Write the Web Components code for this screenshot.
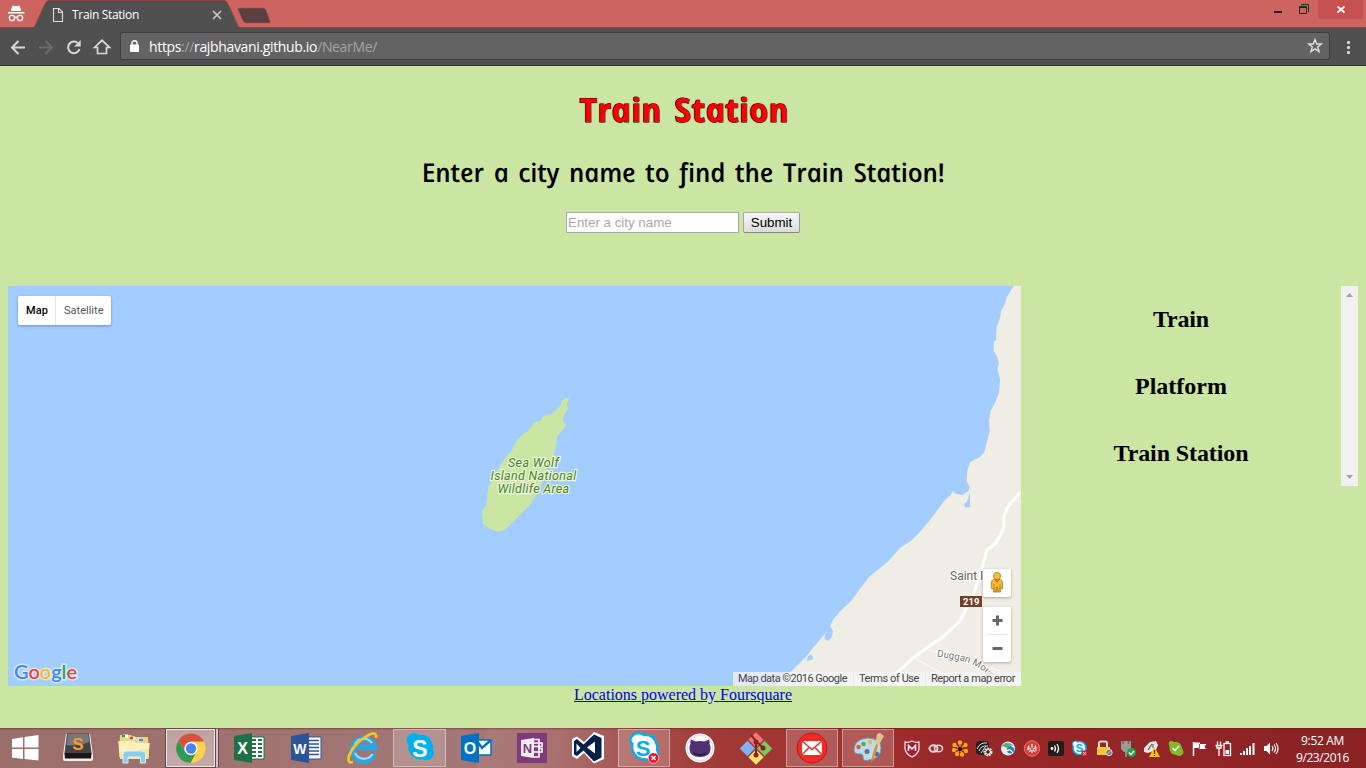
<!DOCTYPE html>
<html lang="en">
<head>
<meta charset="utf-8">
<title>Train Station</title>
<style>
html,body{margin:0;height:100%;overflow:hidden}
body{display:flex;flex-direction:column;background:#cbe6a3;font-family:"Liberation Serif",serif}
</style>
</head>
<body>
<browser-bar></browser-bar>
<station-page></station-page>
<task-bar></task-bar>
<script>
const define=(name,html,after)=>customElements.define(name,class extends HTMLElement{
  connectedCallback(){
    if(this.shadowRoot)return;
    this.attachShadow({mode:'open'}).innerHTML=html;
    if(after)after(this);
  }
});

/* Browser window frame: tab strip and address bar */
define('browser-bar',`
<style>
:host{display:block;flex:none;height:66px;font-family:"Open Sans","Noto Sans",sans-serif;color:#fff}
*{box-sizing:border-box}
.strip{height:28px;background:#cd645f;display:flex;position:relative}
.strip>svg{flex:none;display:block}
.tabtitle{position:absolute;left:72px;top:7px;font-size:12px;line-height:16px}
.tools{height:38px;background:#505050;border-bottom:1px solid #333;display:flex;align-items:center;padding-bottom:1px}
.tools>svg{flex:none}
.url{width:1210px;height:28px;background:#636363;border:1px solid #3b3b3b;border-radius:3px;display:flex;align-items:center;font-size:14px;padding-left:9px}
.url span{color:#a4a4a4}
.url fit-text{margin-left:10px;color:#fff}
.url .star{margin-left:auto;margin-right:6px}
</style>
<div class="strip">
<svg width="1366" height="28" viewBox="0 0 1366 28">
<rect y="27" width="1366" height="1" fill="#8b4542"/>
<path d="M34 28L45 4Q46.500 .5 49 .5H224Q226.500 .5 228 4L239 28Z" fill="#505050" stroke="#8b4542"/>
<rect x="34" y="27" width="205" height="1" fill="#505050"/>
<path d="M239 8H263Q265 8 266 10L270 21Q270.500 23 269 23H246Q244 23 243 21L238 9.500Q237.800 8 239 8Z" fill="#5a4140" stroke="#a9524f" stroke-width=".6"/>
<path d="M11 10L12.500 5.500L16 6.300L19.500 5.500L21 10V11H11ZM8 12H24.500V13.600H8Z" fill="#fff"/>
<g fill="none" stroke="#fff" stroke-width="1.200"><circle cx="12" cy="18" r="2.700"/><circle cx="20" cy="18" r="2.700"/><path d="M14.700 17.500Q16 16.700 17.300 17.500"/></g>
<path d="M53.500 8.500H59L62.500 12V21.500H53.500ZM58.500 8.500V12.500H62.500" fill="none" stroke="#ddd" stroke-width="1.100"/>
<path d="M213 11L221 19M221 11L213 19" stroke="#c8c8c8" stroke-width="1.700"/>
<rect x="1274" y="11" width="8" height="2" fill="#2b2020"/>
<path d="M1299.500 6.500H1306.500V13.500H1299.500ZM1299 7.500H1307M1301 4.500H1308.500V12" fill="none" stroke="#2b2020" stroke-width="1"/>
<rect x="1318" width="45" height="19" fill="#c75050"/>
<path d="M1337.500 6.500L1344.500 12.500M1344.500 6.500L1337.500 12.500" stroke="#fff" stroke-width="1.700"/>
</svg>
<fit-text class="tabtitle" w="67">Train Station</fit-text>
</div>
<div class="tools">
<svg width="120" height="36" viewBox="0 28 120 36">
<path d="M25 47.500H12.500M18.500 41L12 47.500L18.500 54" fill="none" stroke="#d9d9d9" stroke-width="2"/>
<path d="M39 47.500H51.500M45.500 41L52 47.500L45.500 54" fill="none" stroke="#6b6b6b" stroke-width="2"/>
<path d="M79.500 49A5.800 5.800 0 1 1 77.800 43" fill="none" stroke="#d9d9d9" stroke-width="2"/>
<path d="M80.700 40V46.500H74.200Z" fill="#d9d9d9"/>
<path d="M94.500 47.500L102 40.300L109.500 47.500H106.500V53.500H97.500V47.500Z" fill="none" stroke="#d9d9d9" stroke-width="1.700"/>
</svg>
<div class="url">
<svg width="9" height="12" viewBox="0 0 9 12"><rect y="4.500" width="9" height="7.500" rx=".8" fill="#fff"/><path d="M2 5V3.200A2.500 2.500 0 0 1 7 3.200V5" fill="none" stroke="#fff" stroke-width="1.400"/></svg>
<fit-text w="228">https<span>://</span>rajbhavani.github.io<span>/NearMe/</span></fit-text>
<svg class="star" width="16" height="16" viewBox="0 0 16 16"><path d="M8 1.700L9.800 6H14.300L10.700 8.900L12 13.600L8 10.900L4 13.600L5.300 8.900L1.700 6H6.200Z" fill="none" stroke="#ddd" stroke-width="1.500"/></svg>
</div>
<svg width="36" height="36" viewBox="1330 28 36 36" fill="#d9d9d9"><rect x="1347" y="41" width="3" height="3" rx="1"/><rect x="1347" y="46" width="3" height="3" rx="1"/><rect x="1347" y="51" width="3" height="3" rx="1"/></svg>
</div>`);

/* Map with land, labels and controls */
define('city-map',`
<style>
:host{display:block;position:relative;width:1013px;height:400px;overflow:hidden;font-family:Roboto,sans-serif;font-size:11px}
*{box-sizing:border-box}
svg{display:block}
.types{position:absolute;left:10px;top:10px;display:flex;height:29px;background:#fff;border-radius:2px;box-shadow:0 1px 3px rgba(0,0,0,.3);line-height:29px;color:#565656}
.types div{padding:0 7.5px 0 8px}
.types div:first-child{color:#000;font-weight:500;border-right:1px solid #e6e6e6;width:38px}
.ctl{position:absolute;right:10px;width:28px;background:#fff;border-radius:2px;box-shadow:0 1px 3px rgba(0,0,0,.3)}
.man{top:283px;height:28px}.zoom{top:321px;height:55px}
.terms{position:absolute;right:0;bottom:0;height:14px;line-height:14px;display:flex;background:rgba(245,245,245,.75);color:#444;font-size:11px}
.terms div{padding:0 6px 0 5px;border-left:1px solid #ebe9e4}
.terms div:first-child{border:0}
.logo{position:absolute;left:6px;top:373px;font:600 20px/24px Lato,sans-serif;-webkit-text-stroke:3px #d9e8fb;paint-order:stroke}
.place{position:absolute;left:475px;top:170px;width:101px;font-size:12.5px;line-height:13px;font-style:italic;color:#4a8424;-webkit-text-stroke:2.4px #eaf5dc;paint-order:stroke;display:flex;flex-direction:column;align-items:center}
</style>
<svg width="1013" height="400" viewBox="8 286 1013 400">
<rect x="8" y="286" width="1013" height="400" fill="#a3ccff"/>
<path fill="#f0ede5" d="M1013.700 286L1010 292L1006.700 297L1005 304L1001 311L1000 318L996.700 327L996 340L993.700 342V351L997 357L999 363L997.300 369L1000 379L999.500 388L999 393L995 403L991 410L989 420L989.700 431L986.700 443L984 453L980 457L970 462L967.500 470L966.500 481L969.700 487L968.700 491L962 495L955 493.300L952.700 490.700L950.700 495L945 500L940 506.500L930 520L918 534L910 541.500L900 548L888 561.500L869 577L858 591.500L851 601L840 611.500L833 620L828 630L813 648L805 658L792 670.500L774 686H1021V286Z"/>
<path fill="#a3ccff" d="M970 492V507L965 507.500L964 504L967 502ZM830 626L833 631L832 637L828 641L824.500 639L825 635ZM811 654L813 657L812.500 659.500L807 661L807.500 657Z"/>
<path d="M925 649L940 653L1000 671M914 658L940 672L960 684" fill="none" stroke="#fafaf7" stroke-width="1.200"/>
<path d="M1021 492L1015 498L1007 508L1004 517L1003.700 528L996 543L987 550L981.700 570L974 593L960 621L943 637L925 649L913 658L897 673L880 690" fill="none" stroke="#fff" stroke-width="3" stroke-linejoin="round"/>
<path fill="#cbe6a3" d="M565 398L569 398.500L567 404L568 409L564 415L563 421L566 425.500L562 431L557 437L556 447L553 457L548 468L538 492L530 505L522 513L513 522L505 530L498 531.500L490 529L483 524L482 511L485 508L487 500L488 488L495 475L500 466L505 458L512 450L517 440L523 434L527 432L535 422L540 421L544 416L552 414L557 409L561 405L562 401Z"/>
<text x="950" y="580.300" font-size="12" fill="#6b6351" stroke="#fff" stroke-width="2" paint-order="stroke">Saint I</text>
<rect x="960" y="596" width="22" height="11" fill="#733f2b"/><text x="963" y="605" font-size="9.500" font-weight="700" fill="#fff">219</text>
<path id="street" d="M936.500 656.500C958 660 971 661 984 672L1015 700" fill="none"/>
<text font-size="9.800" fill="#77756f" stroke="#fff" stroke-width="2" paint-order="stroke"><textPath href="#street">Duggan Mountain</textPath></text>
</svg>
<div class="place"><fit-text w="51">Sea Wolf</fit-text><fit-text w="86">Island National</fit-text><fit-text w="72">Wildlife Area</fit-text></div>
<fit-text class="logo" w="63"><span style="color:#4285f4">G</span><span style="color:#ea4335">o</span><span style="color:#fbbc05">o</span><span style="color:#4285f4">g</span><span style="color:#34a853">l</span><span style="color:#ea4335">e</span></fit-text>
<div class="types"><div><fit-text w="22">Map</fit-text></div><div><fit-text w="39.500">Satellite</fit-text></div></div>
<div class="ctl man"><svg width="28" height="28" viewBox="983 569 28 28"><path d="M993.500 579.500Q991.500 580 991.300 583V588.500H993.300V592H1000.700V588.500H1002.500V583Q1002.500 580 1000.500 579.500Z" fill="#fbb829" stroke="#9a7c43" stroke-width=".8"/><path d="M993.900 584V588.500H994.900V591.500H996.500V587H997.500V591.500H999.100V588.500H1000.100V584" fill="none" stroke="#a87d2d" stroke-width=".7"/><path d="M994.500 579.500H999.500L997 583Z" fill="#e66d20"/><circle cx="997" cy="576" r="3.600" fill="#fbc02d" stroke="#9a7c43" stroke-width=".8"/></svg></div>
<div class="ctl zoom"><svg width="28" height="55" viewBox="983 607 28 55"><path d="M992.500 620.500H1002.500M997.500 615.500V625.500M992.500 648.500H1002.500" stroke="#666" stroke-width="3"/><path d="M987 634.500H1006" stroke="#e6e6e6"/></svg></div>
<div class="terms"><div><fit-text w="109">Map data ©2016 Google</fit-text></div><div><fit-text w="60">Terms of Use</fit-text></div><div><fit-text w="84">Report a map error</fit-text></div></div>
`);

/* Scrolling column of place names */
define('place-list',`
<style>
:host{display:flex;width:337px;height:200px;color:#000}
.items{flex:1;text-align:center;padding-top:20px}
.bar{width:17px;background:#f1f1f1}
svg{display:block}
</style>
<div class="items"><slot></slot></div>
<div class="bar"><svg width="17" height="200"><path d="M5 11L8.500 7L12 11ZM5 189L8.500 193L12 189Z" fill="#a3a3a3"/></svg></div>
`);

define('station-page',`
<style>
:host{display:flex;flex-direction:column;align-items:center;flex:1;background:#cbe6a3}
h1,h2,form{margin:0}
.hand{font-family:"Comic Sans MS","Open Sans",sans-serif;font-style:italic;line-height:40px;height:40px;transform:skewX(12deg)}
h1{margin-top:24px;font-size:33px;font-weight:700;color:#f00;-webkit-text-stroke:1px #300;paint-order:stroke;word-spacing:4px;text-shadow:0 0 1px #000}
.hand.lead{margin-top:22px;font-size:26px;font-weight:600;word-spacing:3px;color:#000}
form{margin-top:20px;display:flex;gap:4px;height:21px}
input,button{box-sizing:border-box;height:21px;font:13.333px "Liberation Sans",Arial,sans-serif;margin:0}
input{width:173px;border:1px solid #a9a9a9;padding:0 1px;background:#fff;border-radius:0}
input::placeholder{color:#a9a9a9}
button{width:57px;padding:0;border:1px solid #a0a0a0;border-color:#aaa #999 #888 #aaa;border-radius:2px;background:linear-gradient(#f6f6f6,#dcdcdc);color:#000}
.main{display:flex;align-self:stretch;margin:53px 8px 0;height:400px}
place-list h2{margin:0 0 40px;font-size:24px;line-height:27px;font-weight:700}
.credit{font-size:16px;line-height:18px;color:#00e}
.credit fit-text{text-decoration:underline}
</style>
<h1 class="hand"><fit-text w="209">Train Station</fit-text></h1>
<h2 class="hand lead"><fit-text w="523">Enter a city name to find the Train Station!</fit-text></h2>
<form><input placeholder="Enter a city name"><button type="button">Submit</button></form>
<div class="main"><city-map></city-map>
<place-list><h2><fit-text w="56">Train</fit-text></h2><h2><fit-text w="92">Platform</fit-text></h2><h2><fit-text w="135">Train Station</fit-text></h2></place-list></div>
<a class="credit" href="#"><fit-text w="218">Locations powered by Foursquare</fit-text></a>
`);

/* Taskbar glyphs, each on a 40 x 40 field (tray glyphs 24 x 40) */
const skype='<path d="M9 7Q14 3 20 7Q31 6 34 17Q35 20 34.500 23Q37 28 33 32Q29 36 24 33.500Q11 34 8 23Q7.500 20 8 17Q3 12 9 7Z" transform="translate(1 .3) scale(.93)"';
const icons={
start:'<path d="M7 11L18 9.300V19.500H7ZM19.500 9L33.500 7V19.500H19.500ZM7 21H18V31L7 29.500ZM19.500 21H33.500V32.500L19.500 31Z" fill="#fff"/>',
sublime:'<path d="M8 6H32L35 27V31Q35 33 33 33H7Q5 33 5 31V27Z" fill="#eee"/><path d="M9 5.500H31L33.500 25Q33.500 27 32 27H8Q6.500 27 6.500 25Z" fill="#444"/><path d="M10 6H30L31.500 14Q20 19 8.500 17Z" fill="#777"/><path d="M6.500 25H33.500L33 30.500H7Z" fill="#171717"/><text x="20" y="21.500" font-size="17" font-weight="700" fill="#ff9a3d" text-anchor="middle">S</text>',
explorer:'<path d="M6 7H17L19 9H34L35 29H5Z" fill="#ead584"/><path d="M9 8H14M16 10H21M24 12H29" stroke="#fff" stroke-width="3"/><path d="M8 8H11" stroke="#2c9c43" stroke-width="2.500"/><path d="M16 10H19" stroke="#c93c2c" stroke-width="2.500"/><path d="M25 12H29" stroke="#3495d1" stroke-width="2.500"/><path d="M4.500 13H20L22 15H35.500L34.500 31H6Z" fill="#fae69a"/><path d="M4.500 13H20L22 15H35.500L35 21L5 25Z" fill="#fdf1b9"/><path d="M9 35V26Q9 23 12 23H28Q31.500 23 31.500 26V35H26.500V29H14V35Z" fill="#8ccceb" stroke="#d9f1fb"/>',
chrome:'<circle cx="20" cy="20.500" r="14.500" fill="#fcd34a"/><path d="M7.440 12.750A14.500 14.500 0 0 0 19.500 35L26 23L20 20L14 23Z" fill="#2f9a55"/><path d="M7.440 12.750L14 23L20 13.500H33A14.500 14.500 0 0 0 7.440 12.750Z" fill="#d94f40"/><circle cx="20" cy="20.500" r="6.700" fill="#fff"/><circle cx="20" cy="20.500" r="5.200" fill="#4a86e8"/>',
excel:'<path d="M20 9H35V31H20Z" fill="#fff" stroke="#207347"/><path d="M22 12H27M29 12H33M22 16H27M29 16H33M22 20H27M29 20H33M22 24H27M29 24H33M22 28H27M29 28H33" stroke="#207347" stroke-width="2.200"/><path d="M5 8L23 5V35L5 32Z" fill="#1e7145"/><text x="13.500" y="26" font-size="16" font-weight="700" fill="#fff" text-anchor="middle">X</text>',
word:'<path d="M20 9H35V31H20Z" fill="#fff" stroke="#2a5699"/><path d="M23 12.500H33M23 16H33M23 19.500H33M23 23H33M23 26.500H33" stroke="#2a5699" stroke-width="1.600"/><path d="M5 8L23 5V35L5 32Z" fill="#2a5699"/><text x="13.800" y="25.500" font-size="14" font-weight="700" fill="#fff" text-anchor="middle">W</text>',
ie:'<path d="M31 26A11 11 0 1 1 31.500 19.500H14" fill="none" stroke="#2ea5de" stroke-width="6"/><path d="M29.500 26A10 10 0 0 1 12 25M12 16A10 10 0 0 1 29 15" fill="none" stroke="#9be2fb" stroke-width="2"/><path d="M10 34Q4 36 6 28Q11 15 24 8Q34 2 33 10" fill="none" stroke="#f4c426" stroke-width="2.700"/>',
skype:skype+' fill="#00aff0"/><text x="20" y="28.500" font-size="23" font-weight="700" fill="#fff" text-anchor="middle">S</text>',
outlook:'<path d="M20 12H35V27H20Z" fill="#fff" stroke="#0072c6" stroke-width="1.500"/><path d="M21 13L26 20L35 12" fill="none" stroke="#0072c6" stroke-width="2.500"/><path d="M5 8L23 5V35L5 32Z" fill="#0072c6"/><text x="14" y="26" font-size="16" font-weight="700" fill="#fff" text-anchor="middle">O</text>',
onenote:'<rect x="5" y="5" width="30" height="30" fill="#80397b"/><path d="M22 11.500H27V29H22M22 15H30V18.500H22M26 20.500H30V24H22" stroke="#fff" stroke-width="1.600" fill="none"/><path d="M9 12L22 10V30L9 28Z" fill="#f7eef6"/><text x="15.500" y="25" font-size="13" font-weight="700" fill="#80397b" text-anchor="middle">N</text>',
vs:'<path d="M26 4L36 8V31L26 35.500L16 25L9 31L4 28V11L9 8.500L16 14Z" fill="#fff"/><path d="M26 6.500L33.500 10V29.500L26 33.500L15.500 22.500L9 28L6 26.500V13L9 11L15.500 16.500Z" fill="#061f4a"/><path d="M8.500 15.500L12.500 20L8.500 24ZM27 13.500V25.500L19 19.500Z" fill="#fff"/>',
skypeb:skype+' fill="#fff" stroke="#00aff0" stroke-width="2.500"/><text x="19" y="27.500" font-size="22" font-weight="700" fill="#00aff0" text-anchor="middle">S</text><circle cx="29.500" cy="30" r="5.300" fill="#e81123" stroke="#fff" stroke-width=".6"/><path d="M27.500 28L31.500 32M31.500 28L27.500 32" stroke="#fff" stroke-width="1.500"/>',
github:'<circle cx="20" cy="20" r="14.500" fill="#f8f5fb"/><circle cx="20" cy="20" r="12.800" fill="none" stroke="#d9d2df" stroke-width=".7"/><path d="M11 11.500L15.500 13.500Q20 12.500 24.500 13.500L29 11.500Q30 14 29.500 16Q31 18 30.500 21Q30 29 20 29T9.500 21Q9 18 10.500 16Q10 14 11 11.500Z" fill="#4f3073"/><path d="M13 24Q20 28 27 24Q25 28 20 28T13 24Z" fill="#321a4b"/>',
git:'<g transform="translate(0 .5) rotate(45 20 20)"><rect x="8.500" y="8.500" width="10.800" height="10.800" fill="#f07578"/><rect x="20.700" y="8.500" width="10.800" height="10.800" fill="#79c95e"/><rect x="20.700" y="20.700" width="10.800" height="10.800" fill="#ffe16b"/><rect x="8.500" y="20.700" width="10.800" height="10.800" fill="#82b1f0"/></g><path d="M15 7L20 13V28M20 13L27 20" stroke="#8b2025" stroke-width="2" fill="none"/><g fill="#8b2025"><circle cx="20" cy="14" r="2.500"/><circle cx="27" cy="20" r="2.500"/><circle cx="20" cy="27" r="2.500"/></g>',
mail:'<circle cx="20" cy="20" r="15" fill="#f12b24" stroke="#b11f1c"/><rect x="10" y="13" width="20" height="14" fill="#fff"/><path d="M10 13L20 21.500L30 13M10 27L17 19.500M30 27L23 19.500" fill="none" stroke="#f12b24" stroke-width="1.400"/>',
paint:'<path d="M6 22Q6 11 20 10Q33 11 33 20Q33 30 21 32Q15 34 15 29Q15 25 10 26Q6 26 6 22Z" fill="#b9ddeb" stroke="#6e9cb4"/><circle cx="10.500" cy="19" r="2.200" fill="#e9503f"/><circle cx="15.500" cy="16" r="2.300" fill="#5daa47"/><circle cx="22" cy="14" r="2.300" fill="#edc033"/><circle cx="19" cy="23.500" r="2.500" fill="#6f7077"/><circle cx="28.500" cy="26" r="2.500" fill="#5169bd"/><path d="M23 35Q24 26 28 16L30 17Q28 28 23 35Z" fill="#e78b30"/><path d="M27.500 15L29 6L32 5L36 8L31 17Z" fill="#dec58d"/>',
shield:'<path d="M5 14Q9 15 12 13Q15 15 19 14V21Q18 26 12 29Q6 26 5 21Z" fill="#b71234" stroke="#e9e2e2" stroke-width="1.300"/><path d="M8.500 23V17.500L12 21L15.500 17.500V23" fill="none" stroke="#fff" stroke-width="1.500"/>',
cloud:'<ellipse cx="9.500" cy="20.500" rx="4" ry="3.300" fill="none" stroke="#e8dada" stroke-width="2"/><ellipse cx="14.500" cy="20.500" rx="4" ry="3.300" fill="none" stroke="#e8dada" stroke-width="1.600"/>',
sun:'<g fill="#f5a81c"><circle cx="12" cy="14.500" r="2.200"/><circle cx="17.500" cy="17" r="2.200"/><circle cx="18" cy="23" r="2.200"/><circle cx="14" cy="26.500" r="2.200"/><circle cx="9" cy="26" r="2.200"/><circle cx="6" cy="22" r="2.200"/><circle cx="6.500" cy="17" r="2.200"/></g><path d="M12 15V19M17 17L13 20M18 23L13 21.500M14 26L12.500 22M9 26L11 22M6 22L10.500 21M7 17L11 20" stroke="#f5a81c" stroke-width="1.200"/><circle cx="12" cy="21" r="2.200" fill="#37150c"/>',
gear:'<rect x="4" y="13" width="13" height="14" rx="4" fill="#252020"/><path d="M5 21Q8 14 15 15M7 23Q9 17 16 18M9 25L14 18" fill="none" stroke="#ddd" stroke-width="1"/><circle cx="16" cy="24" r="3.300" fill="none" stroke="#e3e3e3" stroke-width="2.500" stroke-dasharray="1.700 .7"/><circle cx="16" cy="24" r="2.300" fill="none" stroke="#eee"/>',
swirl:'<circle cx="12" cy="20.500" r="7" fill="#e9eef0"/><path d="M5 19Q10 11 18 18Q11 16 5 19Z" fill="#5aa7d3"/><path d="M7 18Q13 14 16 19L11 20Z" fill="#6aa93e"/><circle cx="14.500" cy="22" r="3.600" fill="#1d85c6"/><path d="M11 23Q14 20 17 25" stroke="#fff" stroke-width="1.200" fill="none"/>',
star:'<circle cx="12" cy="20.500" r="7.700" fill="#d93b36" stroke="#e77771"/><path d="M12 16V19.500M9 17.500L8 20L11 20.500M15 17.500L16 20L13 20.500M9 24L11 21.500M15 24L13 21.500M12 22V25M7 21.500H9M15 22H17" stroke="#fff" stroke-width="1.200" fill="none"/>',
waves:'<rect x="4" y="13" width="16" height="15" rx="2" fill="#221c1c"/><circle cx="8" cy="20.500" r="1.400" fill="#fff"/><path d="M10.500 17.500Q12.500 20.500 10.500 23.500M13 16Q16 20.500 13 25" fill="none" stroke="#eee" stroke-width="1.300"/>',
skt:'<circle cx="11.500" cy="20" r="6.500" fill="#fff" stroke="#00aff0" stroke-width="1.500"/><circle cx="7.500" cy="16" r="3" fill="#fff" stroke="#00aff0"/><circle cx="11.500" cy="20" r="5.500" fill="#fff"/><text x="11.500" y="24" font-size="11" font-weight="700" fill="#00aff0" text-anchor="middle">S</text><rect x="13.500" y="22.500" width="6" height="6" fill="#d8173b"/><path d="M15 24L18 27M18 24L15 27" stroke="#fff"/>',
lock:'<path d="M7 20V15.500Q7 13.500 9 13.500H13Q15 13.500 15 15.500V20" fill="none" stroke="#dcdcdc" stroke-width="2"/><rect x="5" y="19" width="13" height="8" fill="#f5cb33"/><circle cx="17" cy="24.500" r="3.200" fill="#776" stroke="#ddd"/><path d="M15 26.500L19 22.500" stroke="#ddd"/>',
usb:'<path d="M5 13H15V21L12 24H8L5 21Z" fill="#999"/><path d="M7 13V16M12.500 13V16" stroke="#666" stroke-width="1.500"/><path d="M10 24V29" stroke="#888" stroke-width="2"/><circle cx="15.500" cy="24.500" r="4.500" fill="#22a447"/><path d="M13 24.500L15 26.500L18 23" fill="none" stroke="#fff" stroke-width="1.500"/>',
warn:'<path d="M4 24V20L10 14L16 13L18 17L16 22L8 25Z" fill="#e8e8e8"/><path d="M8 22L12 16M13 16V20" stroke="#555" stroke-width="1.100"/><path d="M14.500 19L20 29H9Z" fill="#ffc11b"/><path d="M14.500 22V26M14.500 27V28" stroke="#5a370c" stroke-width="1.300"/>',
green:'<path d="M5 14Q7 12 10 14Q17 13 18 20Q21 25 18 27Q15 29 12 27Q5 26 5.500 19Q4 16 5 14Z" fill="#7fba2b"/><path d="M8.500 20L11 22.500L15 18" fill="none" stroke="#fff" stroke-width="1.400"/>',
flag:'<path d="M5.500 14V28" stroke="#fff" stroke-width="1.500"/><path d="M6 14.500H12V16H18.500L16.500 18.500L18 21H11.500V20H6Z" fill="#fff"/><path d="M11.500 16V20" stroke="#8d2525" stroke-width=".8"/>',
battery:'<rect x="12" y="15.500" width="6.500" height="12" fill="none" stroke="#fff" stroke-width="1.300"/><path d="M13.500 14H17" stroke="#fff" stroke-width="1.500"/><rect x="13.500" y="22" width="3.500" height="4" fill="#fff"/><path d="M5.500 13.500V17M8.500 13.500V17M3.500 17.500H10.500M5 17V20H9V17M7 20V28" stroke="#fff" fill="none" stroke-width="1.300"/>',
signal:'<path d="M5 27V25M8 27V23M11 27V20M14 27V18M17.500 27V15" stroke="#fff" stroke-width="2"/>',
sound:'<path d="M4 18H6.500L10 14.500V26.500L6.500 23H4Z" fill="#fff"/><path d="M12 18Q14 20.500 12 23M14 16.500Q17 20.500 14 24.500M16 15Q20 20.500 16 26" fill="none" stroke="#fff" stroke-width="1.100"/>'
};
customElements.define('app-icon',class extends HTMLElement{
  connectedCallback(){
    const tray=this.hasAttribute('tray'),w=tray?24:40;
    this.attachShadow({mode:'open'}).innerHTML=`<style>:host{display:block;width:${w}px;height:40px;font-family:"Liberation Sans",sans-serif}svg{display:block}</style><svg width="${w}" height="40" viewBox="0 0 ${w} 40">${icons[this.getAttribute('name')]}</svg>`;
  }
});

const apps=[['start',50],['sublime',56],['explorer',56],['chrome',58,'on cur'],['excel',57],['word',57],['ie',57],['skype',57,'on'],['outlook',56],['onenote',56],['vs',56],['skypeb',56,'on'],['github',56],['git',56],['mail',56,'on'],['paint',56,'on']];
const tray=['shield','cloud','sun','gear','swirl','star','waves','skt','lock','usb','warn','green','flag','battery','signal','sound'];
define('task-bar',`
<style>
:host{display:flex;flex:none;height:40px;color:#fff;font-family:"Open Sans","Noto Sans",sans-serif;
background:linear-gradient(105deg,transparent 470px,rgba(255,255,255,.05) 471px,transparent 660px),linear-gradient(rgba(75,20,20,.45),transparent 2px),linear-gradient(90deg,#9a6e6b 0,#a07370 250px,#a27775 460px,#a66b69 560px,#a44b48 650px,#a03a36 720px,#9e312e 860px,#982727 960px,#942526 1150px,#8a2224 1366px)}
*{box-sizing:border-box}
.slot{display:flex;justify-content:center;position:relative;flex:none}
.on::before{content:"";position:absolute;left:2px;right:2px;top:1px;bottom:1px;background:rgba(255,255,255,.2);border:1px solid rgba(255,255,255,.38)}
.cur::before{left:4px;right:5px;background:linear-gradient(#bfa3a0,#c3aaa8);border-color:#f1e7e7;box-shadow:0 0 0 1px #66484a,3px 0 0 0 #d5c4c3,4px 0 0 0 #66484a}
app-icon{position:relative}
.tray{display:flex;margin-left:4px}
.clock{flex:1;display:flex;flex-direction:column;align-items:center;padding:4px 5px 0 0;font-size:12px;line-height:17px}
</style>
${apps.map(a=>`<div class="slot ${a[2]||''}" style="width:${a[1]}px"><app-icon name="${a[0]}"></app-icon></div>`).join('')}
<div class="tray">${tray.map(t=>`<app-icon tray name="${t}"></app-icon>`).join('')}</div>
<div class="clock"><fit-text w="43">9:52 AM</fit-text><fit-text w="53">9/23/2016</fit-text></div>
`);

/* Spaces its letters so that the line is w pixels wide */
customElements.define('fit-text',class extends HTMLElement{
  connectedCallback(){
    this.attachShadow({mode:'open'}).innerHTML='<style>:host{display:inline-block;white-space:nowrap}</style><slot></slot>';
    const d=+this.getAttribute('w')-parseFloat(getComputedStyle(this).width);
    this.style.letterSpacing=d/this.textContent.length+'px';
  }
});
</script>
</body>
</html>
